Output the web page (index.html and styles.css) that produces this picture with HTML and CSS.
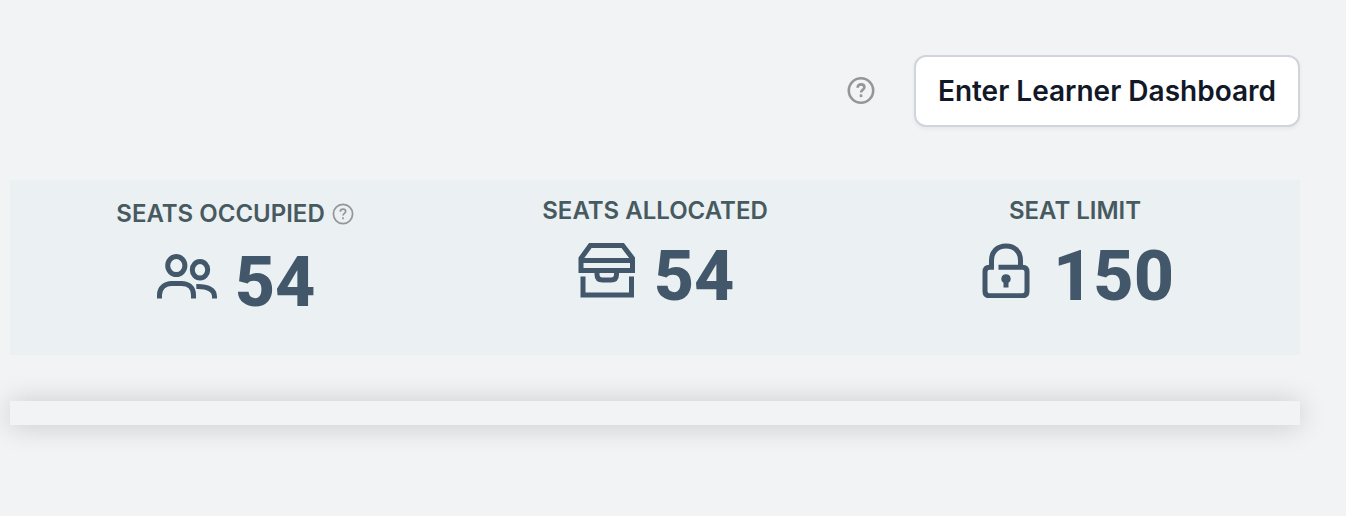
FILE: index.html
```html
<!DOCTYPE html>
<html lang="en">
<head>
<meta charset="utf-8">
<title>Learner Dashboard</title>
<link rel="stylesheet" href="styles.css">
</head>
<body>
<main class="page">
  <header class="toolbar">
    <svg class="help help-large" viewBox="0 0 28 28" role="img" aria-label="Help"><circle cx="14" cy="13.500" r="12.2"/><path d="M10.600 10.700c0-2 1.400-3.300 3.400-3.300s3.400 1.200 3.400 2.900c0 2.500-3.300 2.500-3.300 5.200"/><path d="M14 17.300v2.800"/></svg>
    <button class="enter" type="button">Enter Learner Dashboard</button>
  </header>
  <section class="stats">
    <div class="stat">
      <h2 class="label label-help">SEATS OCCUPIED
        <svg class="help help-small" viewBox="0 0 28 28" role="img" aria-label="Help"><circle cx="14" cy="14" r="12.2"/><path d="M10.6 11.2c0-2 1.4-3.3 3.4-3.3s3.4 1.2 3.4 2.9c0 2.5-3.3 2.5-3.3 5.2"/><path d="M14 18v2.6"/></svg>
      </h2>
      <div class="figure">
        <svg class="icon people" viewBox="0 0 60 46" aria-hidden="true"><ellipse cx="19.3" cy="11.6" rx="8.6" ry="9"/><ellipse cx="43" cy="15.8" rx="7.7" ry="8.3"/><path d="M2.5 44.5V41c0-7.500 6-11.500 12-11.500h10c7 0 12 4 12 11.500v3.500"/><path d="M39.300 32.500c12-.3 18.200 3.500 18.200 10v2"/></svg>
        <span class="number">54</span>
      </div>
    </div>
    <div class="stat">
      <h2 class="label">SEATS ALLOCATED</h2>
      <div class="figure">
        <svg class="icon box" viewBox="0 0 58 56" aria-hidden="true"><path d="M3 28.500V16.300L12.300 3.500h32.400L54.500 16.300V28.500z"/><path d="M3 18.500h51.500"/><path d="M19 29v3.500q0 5.500 5.500 5.500h8.500q5.500 0 5.500-5.500V29"/><path d="M5 34.500v18.500h48.500V34.500"/></svg>
        <span class="number">54</span>
      </div>
    </div>
    <div class="stat">
      <h2 class="label">SEAT LIMIT</h2>
      <div class="figure">
        <svg class="icon lock" viewBox="0 0 48 56" aria-hidden="true"><path d="M9.500 25.300V18.500C9.500 9.500 15.500 4 24 4s14.500 5.500 14.500 14.500v6.800"/><path d="M12 25.300H7.500q-4.500 0-4.500 4.500v19.500q0 4.500 4.500 4.500h33q4.500 0 4.500-4.500V29.800q0-4.500-4.500-4.500H16.500"/><path class="solid" d="M24 32.300a4.600 4.600 0 0 0-2.500 8.500V45.500h5V40.800A4.600 4.600 0 0 0 24 32.300z"/></svg>
        <span class="number">150</span>
      </div>
    </div>
  </section>
  <div class="panel"></div>
</main>
</body>
</html>
```
FILE: styles.css
```css
* { box-sizing: border-box; }
body {
  margin: 0;
  background: #f1f3f5;
  font-family: Inter, "Liberation Sans", sans-serif;
}
.page { min-height: 100vh; padding: 55px 46px 64px 10px; }
.toolbar {
  display: flex;
  justify-content: flex-end;
  align-items: center;
  gap: 39px;
}
.help { fill: none; stroke: #969696; stroke-width: 2.6; }
.help-large { width: 28px; height: 28px; }
.help-small { width: 22px; height: 22px; stroke-width: 2.2; }
.enter {
  height: 72px;
  padding: 0 22px;
  border: 2px solid #d1d5db;
  border-radius: 12px;
  background: #fff;
  box-shadow: 0 2px 4px rgba(0, 0, 0, .05);
  color: #111827;
  font: 600 28px/40px Inter, "Liberation Sans", sans-serif;
}
.stats {
  display: grid;
  grid-template-columns: repeat(3, 1fr);
  margin-top: 53px;
  padding: 17px 15px 38px;
  background: #ebf0f3;
}
.stat { display: flex; flex-direction: column; align-items: center; }
.label {
  margin: 0;
  color: #475a60;
  font-size: 24px;
  font-weight: 600;
  line-height: 28px;
}
.label-help { display: flex; align-items: center; gap: 7px; line-height: 34px; }
.figure { display: flex; align-items: flex-start; padding-top: 16px; }
.icon { flex: none; fill: none; stroke: #425769; stroke-width: 5; }
.solid { fill: #425769; stroke: none; }
.people { width: 60px; height: 46px; margin: 7px 18px 0 2px; }
.box { width: 58px; height: 56px; margin: 1px 18px 0 2px; }
.lock { width: 48px; height: 56px; margin: 1px 23px 0 6px; }
.number {
  color: #425769;
  font-family: Roboto, "Liberation Sans", sans-serif;
  font-size: 70px;
  font-weight: 800;
  line-height: 70px;
}
.panel {
  height: 24px;
  margin-top: 46px;
  background: #f1f3f5;
  box-shadow: 0 1px 28px rgba(0, 0, 0, .18);
}
```
